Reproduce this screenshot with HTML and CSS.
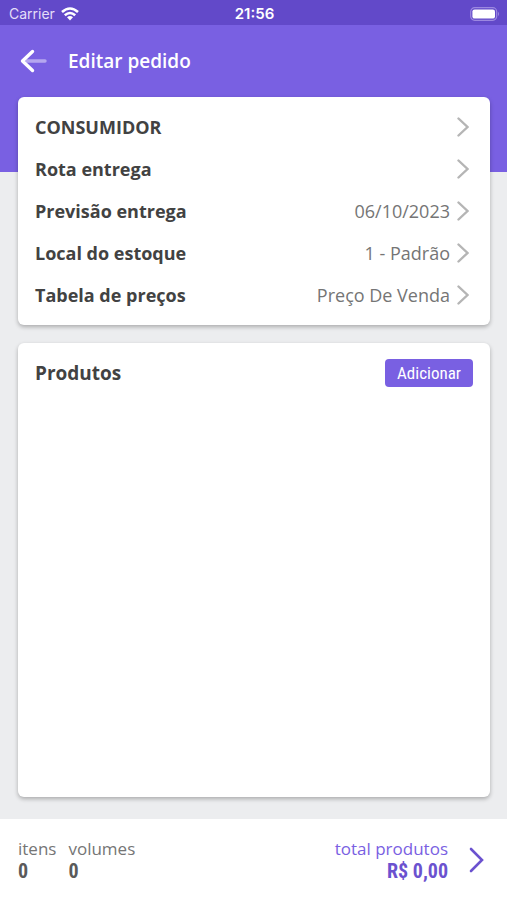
FILE: index.html
```html
<!DOCTYPE html>
<html lang="pt-BR">
<head>
<meta charset="utf-8">
<meta name="viewport" content="width=device-width, initial-scale=1">
<title>Editar pedido</title>
<link rel="stylesheet" href="styles.css">
</head>
<body>
<div class="status">
  <div class="carrier">
    <span>Carrier</span>
    <svg width="18" height="14" viewBox="0 0 18 14" fill="none" stroke="#fff" stroke-width="2.6" aria-hidden="true">
      <path d="M1 5Q9-2 17 5M3.8 8.2Q9 3.8 14.2 8.2"/>
      <path d="M6 10.3Q9 7.9 12 10.3L9 13.6Z" fill="#fff" stroke="none"/>
    </svg>
  </div>
  <time class="clock">21:56</time>
  <svg class="battery" width="30" height="14" viewBox="0 0 30 14" aria-hidden="true">
    <rect x=".7" y=".7" width="26" height="12.6" rx="4" fill="none" stroke="#9c88e0" stroke-width="1.2"/>
    <rect x="2.4" y="2.4" width="22.6" height="9.2" rx="2.2" fill="#fff"/>
    <path d="M28 4.8Q30 7 28 9.2Z" fill="#9c88e0"/>
  </svg>
</div>
<header class="header">
  <button class="back" type="button" aria-label="Voltar">
    <svg width="28" height="24" viewBox="0 0 28 24" fill="none" stroke="#fff" stroke-linecap="round" stroke-linejoin="round" aria-hidden="true">
      <path d="M7 12H25" stroke-width="3.4" opacity=".45"/>
      <path d="M12.5 2.5L2.5 12L12.5 21.5" stroke-width="3.4"/>
    </svg>
  </button>
  <h1>Editar pedido</h1>
</header>
<main class="content">
  <section class="card details">
    <button class="row" type="button"><span class="label">CONSUMIDOR</span><svg class="chevron" viewBox="0 0 12 20"><path d="M1.5 1.5L10.5 10L1.5 18.5"/></svg></button>
    <button class="row" type="button"><span class="label">Rota entrega</span><svg class="chevron" viewBox="0 0 12 20"><path d="M1.5 1.5L10.5 10L1.5 18.5"/></svg></button>
    <button class="row" type="button"><span class="label">Previsão entrega</span><span class="value">06/10/2023</span><svg class="chevron" viewBox="0 0 12 20"><path d="M1.5 1.5L10.5 10L1.5 18.5"/></svg></button>
    <button class="row" type="button"><span class="label">Local do estoque</span><span class="value">1 - Padrão</span><svg class="chevron" viewBox="0 0 12 20"><path d="M1.5 1.5L10.5 10L1.5 18.5"/></svg></button>
    <button class="row" type="button"><span class="label">Tabela de preços</span><span class="value">Preço De Venda</span><svg class="chevron" viewBox="0 0 12 20"><path d="M1.5 1.5L10.5 10L1.5 18.5"/></svg></button>
  </section>
  <section class="card products">
    <h2>Produtos</h2>
    <button class="add" type="button">Adicionar</button>
  </section>
</main>
<footer class="footer">
  <dl class="totals">
    <div><dt>itens</dt><dd>0</dd></div>
    <div><dt>volumes</dt><dd>0</dd></div>
    <div class="sum"><dt>total produtos</dt><dd>R$ 0,00</dd></div>
  </dl>
  <button class="next" type="button" aria-label="Avançar">
    <svg width="15" height="26" viewBox="0 0 15 26" fill="none" stroke="#6b52cf" stroke-width="2.6" stroke-linecap="round" aria-hidden="true"><path d="M2 2L13 13L2 24"/></svg>
  </button>
</footer>
</body>
</html>
```
FILE: styles.css
```css
* {
  box-sizing: border-box;
}

body {
  margin: 0;
  min-height: 100vh;
  display: flex;
  flex-direction: column;
  background: #ecedef;
  color: #424242;
  font-family: "Open Sans", "Noto Sans", sans-serif;
}

h1,
h2,
dl,
dd {
  margin: 0;
}

button {
  border: 0;
  padding: 0;
  background: none;
  color: inherit;
  font: inherit;
  cursor: pointer;
}

svg {
  display: block;
  flex: none;
}

.status {
  display: grid;
  grid-template-columns: 1fr auto 1fr;
  align-items: center;
  height: 25px;
  padding: 2px 7px 0 9px;
  background: #6249c9;
  color: #fff;
  font: 14px/20px Inter, sans-serif;
}

.carrier {
  display: flex;
  align-items: center;
  gap: 6px;
  color: #e4def8;
}

.clock {
  font-size: 15px;
  font-weight: 600;
}

.battery {
  justify-self: end;
}

.header {
  display: flex;
  align-items: center;
  gap: 20px;
  height: 147px;
  padding: 0 20px 75px;
  background: #7960e2;
  color: #fff;
}

h1 {
  font-size: 19px;
  font-weight: 600;
  line-height: 26px;
}

.content {
  flex: 1;
  display: flex;
  flex-direction: column;
  gap: 18px;
  margin-top: -75px;
  padding: 0 17px 22px 18px;
}

.card {
  border-radius: 6px;
  background: #fff;
  box-shadow: 0 2px 4px rgb(0 0 0 / 28%);
}

.details {
  padding: 9px 21px 9px 17px;
}

.row {
  display: flex;
  align-items: center;
  gap: 7px;
  width: 100%;
  height: 42px;
  font-size: 18px;
  text-align: left;
}

.label {
  flex: 1;
  font-weight: 700;
}

.value {
  color: #757575;
}

.chevron {
  width: 12px;
  height: 20px;
  fill: none;
  stroke: #b5b5b5;
  stroke-width: 2.4;
  stroke-linecap: round;
}

.products {
  flex: 1;
  display: flex;
  align-items: flex-start;
  justify-content: space-between;
  padding: 16px 17px;
}

h2 {
  font-size: 19px;
  font-weight: 700;
  line-height: 28px;
}

.add {
  height: 28px;
  padding: 0 12px;
  border-radius: 4px;
  background: #7960e2;
  color: #fff;
  font: 17px/28px "Roboto Condensed", Roboto, sans-serif;
}

.footer {
  display: flex;
  align-items: center;
  gap: 21px;
  height: 81px;
  padding: 0 23px 0 18px;
  background: #fff;
}

.totals {
  flex: 1;
  display: flex;
  gap: 12px;
}

dt {
  color: #757575;
  font-size: 17px;
  line-height: 23px;
}

dd {
  color: #5a5a5a;
  font: 700 20px/23px "Roboto Condensed", Roboto, sans-serif;
}

.sum {
  margin-left: auto;
  text-align: right;
}

.sum dt {
  color: #7960e2;
}

.sum dd {
  color: #6b52cf;
}
```
